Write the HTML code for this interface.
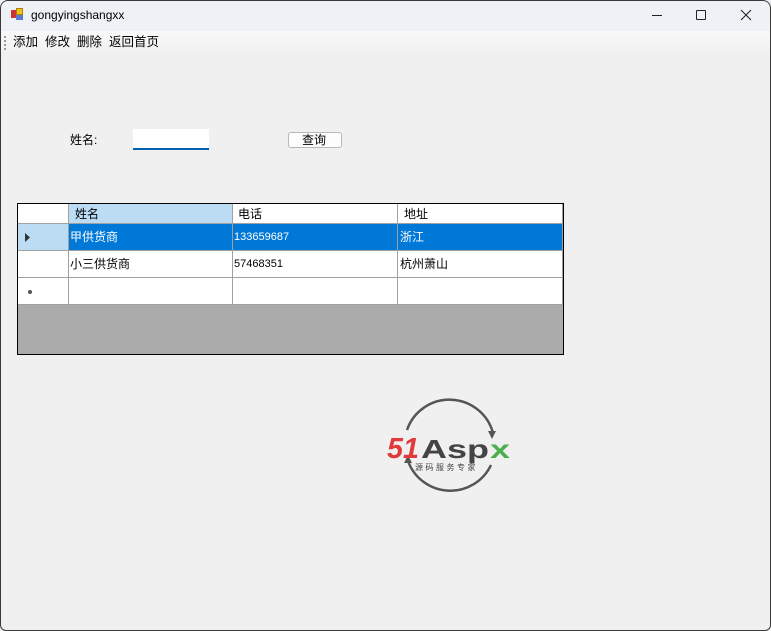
<!DOCTYPE html>
<html><head><meta charset="utf-8"><style>
*{margin:0;padding:0;box-sizing:border-box}
body{width:771px;height:631px;background:#f0f0f0;font-family:"Liberation Sans","Noto Sans CJK SC",sans-serif;font-size:12px;color:#000;position:relative;overflow:hidden}
.a{position:absolute}
.frame{left:0;top:0;width:771px;height:631px;border:1px solid #3a3a3a;border-radius:8px 8px 6px 6px;pointer-events:none}
.c{position:absolute;font-size:12px;line-height:1;white-space:nowrap}
</style></head><body>
<div class="a" style="left:0;top:0;width:771px;height:31px;background:#eef2f7"></div>
<div class="a" style="left:0;top:31px;width:771px;height:23px;background:linear-gradient(#f9f9f9,#f0f0f0)"></div>
<div class="a" style="left:11px;top:10px;width:6px;height:8px;background:#c33"></div>
<div class="a" style="left:16px;top:8px;width:7px;height:7px;background:#f0c020;border:1px solid #b08000"></div>
<div class="a" style="left:16px;top:15px;width:7px;height:5px;background:#5a7ad0"></div>
<div class="c" style="left:31px;top:9px;font-size:12px">gongyingshangxx</div>
<div class="a" style="left:652px;top:15px;width:10px;height:1px;background:#222"></div>
<div class="a" style="left:696px;top:10px;width:10px;height:10px;border:1px solid #222;border-radius:1px"></div>
<svg class="a" style="left:740px;top:9px" width="12" height="12"><path d="M1 1L11 11M11 1L1 11" stroke="#222" stroke-width="1.1"/></svg>
<div class="a" style="left:4px;top:36px;width:2px;height:14px;background:repeating-linear-gradient(#999 0 2px,transparent 2px 4px)"></div>
<div class="c" style="left:13px;top:36px;font-size:12.5px">添加</div>
<div class="c" style="left:45px;top:36px;font-size:12.5px">修改</div>
<div class="c" style="left:77px;top:36px;font-size:12.5px">删除</div>
<div class="c" style="left:109px;top:36px;font-size:12.5px">返回首页</div>
<div class="c" style="left:70px;top:134px">姓名:</div>
<div class="a" style="left:133px;top:129px;width:76px;height:21px;background:#fff;border-bottom:2px solid #0063b1"></div>
<div class="a" style="left:288px;top:132px;width:54px;height:16px;background:#fdfdfd;border:1px solid #b8b8b8;border-radius:3px"></div>
<div class="c" style="left:302px;top:134px">查询</div>
<div class="a" style="left:17px;top:203px;width:547px;height:152px;border:1px solid #000;background:#ababab"></div>
<div class="a" style="left:18px;top:204px;width:545px;height:101px;background:#fff"></div>
<div class="a" style="left:69px;top:204px;width:163px;height:19px;background:#bcdcf4"></div>
<div class="a" style="left:18px;top:224px;width:50px;height:26px;background:#bcdcf4"></div>
<div class="a" style="left:69px;top:224px;width:493px;height:26px;background:#0078d7"></div>
<div class="a" style="left:18px;top:223px;width:545px;height:1px;background:#a0a0a0"></div>
<div class="a" style="left:18px;top:250px;width:545px;height:1px;background:#a0a0a0"></div>
<div class="a" style="left:18px;top:277px;width:545px;height:1px;background:#a0a0a0"></div>
<div class="a" style="left:18px;top:304px;width:545px;height:1px;background:#a0a0a0"></div>
<div class="a" style="left:68px;top:204px;width:1px;height:101px;background:#a0a0a0"></div>
<div class="a" style="left:232px;top:204px;width:1px;height:101px;background:#a0a0a0"></div>
<div class="a" style="left:397px;top:204px;width:1px;height:101px;background:#a0a0a0"></div>
<div class="a" style="left:562px;top:204px;width:1px;height:101px;background:#a0a0a0"></div>
<svg class="a" style="left:25px;top:233px" width="6" height="9"><path d="M0 0L5 4.5L0 9Z" fill="#333"/></svg>
<div class="a" style="left:28px;top:290px;width:4px;height:4px;border-radius:2px;background:#555"></div>
<div class="c" style="left:75px;top:208px">姓名</div>
<div class="c" style="left:238px;top:208px">电话</div>
<div class="c" style="left:404px;top:208px">地址</div>
<div class="c" style="left:70px;top:231px;color:#fff">甲供货商</div>
<div class="c" style="left:234px;top:232px;color:#fff;font-size:11px">133659687</div>
<div class="c" style="left:400px;top:231px;color:#fff">浙江</div>
<div class="c" style="left:70px;top:258px">小三供货商</div>
<div class="c" style="left:234px;top:259px;font-size:11px">57468351</div>
<div class="c" style="left:400px;top:258px">杭州萧山</div>
<svg class="a" style="left:380px;top:395px" width="140" height="105">
<path d="M27 35A45 45 0 0 1 113 38" fill="none" stroke="#555" stroke-width="2.5"/>
<path d="M111 70A45 45 0 0 1 28 66" fill="none" stroke="#555" stroke-width="2.5"/>
<path d="M108 36L116 36L112 44Z" fill="#555"/>
<path d="M24 68L32 68L28 60Z" fill="#555"/>
<text x="7" y="63" font-family="Liberation Sans,sans-serif" font-weight="bold" font-style="italic" font-size="29" fill="#e03a3a" textLength="32" lengthAdjust="spacingAndGlyphs">51</text>
<text x="41" y="63" font-family="Liberation Sans,sans-serif" font-weight="bold" font-size="26" fill="#444" textLength="68" lengthAdjust="spacingAndGlyphs">Asp</text>
<text x="110" y="63" font-family="Liberation Sans,sans-serif" font-weight="bold" font-size="26" fill="#4caf50" textLength="20" lengthAdjust="spacingAndGlyphs">x</text>
<text x="35" y="75" font-family="Noto Sans CJK SC,sans-serif" font-size="8" fill="#444" letter-spacing="2.5">源码服务专家</text>
</svg>
<div class="a frame"></div>
</body></html>
